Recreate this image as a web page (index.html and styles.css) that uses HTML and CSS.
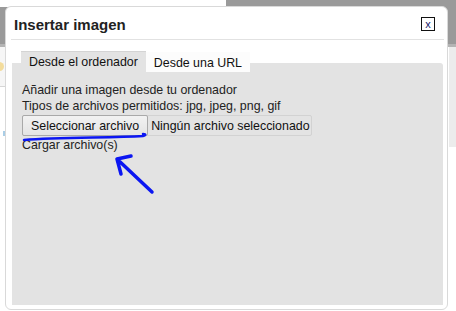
FILE: index.html
```html
<!DOCTYPE html>
<html lang="es">
<head>
    <meta charset="UTF-8">
    <title>Insertar imagen</title>
    <link rel="stylesheet" href="styles.css">
</head>
<body>

    <div class="backdrop">
        <div class="top-strip">
            <div class="strip-white"></div>
            <div class="strip-gray"></div>
        </div>
        <div class="band"></div>
        <div class="band-edge"></div>
        <div class="under">
            <div class="left-col">
                <div class="left-top"><span class="dot"></span></div>
                <div class="left-rest"><span class="blue-mark"></span></div>
            </div>
            <div class="middle"></div>
            <div class="right-col">
                <div class="right-top"></div>
            </div>
        </div>
    </div>

    <div class="dialog">
        <div class="dialog-header">
            <h2 class="dialog-title">Insertar imagen</h2>
            <button class="close-btn" title="Cerrar">x</button>
        </div>

        <div class="tabs-wrap">
            <div class="tabs">
                <div class="tab active">Desde el ordenador</div>
                <div class="tab">Desde una URL</div>
            </div>
            <div class="tab-body">
                <p>Añadir una imagen desde tu ordenador</p>
                <p>Tipos de archivos permitidos: jpg, jpeg, png, gif</p>
                <div class="file-input">
                    <span class="file-btn">Seleccionar archivo</span>
                    <span class="file-name">Ningún archivo seleccionado</span>
                </div>
                <p class="upload">Cargar archivo(s)</p>
            </div>
        </div>
    </div>

    <!-- hand-drawn marks on top of the screenshot -->
    <svg class="marks" width="456" height="311" viewBox="0 0 456 311">
        <path d="M24 140 C 60 137, 110 138, 143 136 C 146 135.5, 146 134, 143 134" fill="none" stroke="#0b16f2" stroke-width="2.5" stroke-linecap="round"/>
        <path d="M152 192 L117 159 M117 159 L131 156 M117 159 L121 174" fill="none" stroke="#0b16f2" stroke-width="3.5" stroke-linecap="round" stroke-linejoin="round"/>
    </svg>

</body>
</html>
```

FILE: styles.css
```css
* {
    box-sizing: border-box;
    margin: 0;
    padding: 0;
}

body {
    width: 456px;
    height: 311px;
    overflow: hidden;
    position: relative;
    background: #fff;
    font-family: "Liberation Sans", Arial, sans-serif;
    font-size: 12.4px;
    color: #222;
}

/* page behind the dialog */
.backdrop {
    display: flex;
    flex-direction: column;
    height: 311px;
}

.top-strip {
    display: flex;
    height: 7px;
}

.strip-white {
    width: 226px;
    background: #fff;
}

.strip-gray {
    flex: 1;
    background: #9a9a9a;
}

.band {
    height: 37px;
    background: #9a9a9a;
}

.band-edge {
    height: 3px;
    background: #b4b4b4;
}

.under {
    flex: 1;
    display: flex;
}

.left-col {
    width: 6px;
    display: flex;
    flex-direction: column;
}

.left-top {
    height: 40px;
    background: #f6f6f6;
    border-bottom: 1px solid #d6d6d6;
    position: relative;
}

.dot {
    position: absolute;
    left: -5px;
    top: 15px;
    width: 9px;
    height: 9px;
    border-radius: 50%;
    background: #f3dc9c;
}

.left-rest {
    flex: 1;
    position: relative;
}

.blue-mark {
    position: absolute;
    left: 3px;
    top: 44px;
    width: 3px;
    height: 5px;
    background: #a9cde6;
}

.middle {
    flex: 1;
}

.right-col {
    width: 7px;
}

.right-top {
    height: 100px;
    background: #ececec;
}

/* dialog */
.dialog {
    position: absolute;
    left: 5px;
    top: 6px;
    width: 443px;
    height: 304px;
    background: #fff;
    border: 1px solid #d9d9d9;
    border-radius: 6px;
    display: flex;
    flex-direction: column;
}

.dialog-header {
    height: 33px;
    margin: 0 3px 0 5px;
    padding: 2px 9px 0 3px;
    display: flex;
    align-items: center;
    justify-content: space-between;
    border-bottom: 1px solid #e2e2e2;
}

.dialog-title {
    font-size: 15px;
    font-weight: 700;
    color: #222;
}

.close-btn {
    width: 14px;
    height: 14px;
    border: 1px solid #111;
    background: #fff;
    font-family: "Liberation Sans", Arial, sans-serif;
    font-size: 11px;
    line-height: 11px;
    color: #1a1a6a;
}

.tabs-wrap {
    margin: 23px 4px 4px 6px;
    flex: 1;
    background: #e3e3e3;
    border-radius: 0 3px 0 0;
    display: flex;
    flex-direction: column;
}

.tabs {
    display: flex;
    margin: -12px 0 0 9px;
}

.tab {
    padding: 4px 8px 0;
    background: #fcfcfc;
    color: #111;
    margin-top: 1px;
    height: 20px;
}

.tab.active {
    background: #e3e3e3;
    border-top: 1px solid #d4d4d4;
    margin-top: 0;
    height: 21px;
    padding-top: 3px;
}

.tab-body {
    padding: 10px 10px;
    line-height: 16px;
}

.file-input {
    display: inline-flex;
    align-items: center;
    margin-top: 1px;
    border: 1px solid #d2d2d2;
    border-radius: 2px;
}

.file-btn {
    height: 21px;
    padding: 0 8px;
    display: flex;
    align-items: center;
    border: 1px solid #a9a9a9;
    border-radius: 2px;
    margin: -1px 0 -1px -1px;
    background: linear-gradient(#f2f2f2, #e4e4e4);
    color: #111;
}

.file-name {
    padding: 0 1px 0 3px;
    color: #111;
}

.upload {
    margin-top: 1px;
}

.marks {
    position: absolute;
    left: 0;
    top: 0;
    pointer-events: none;
}
```
